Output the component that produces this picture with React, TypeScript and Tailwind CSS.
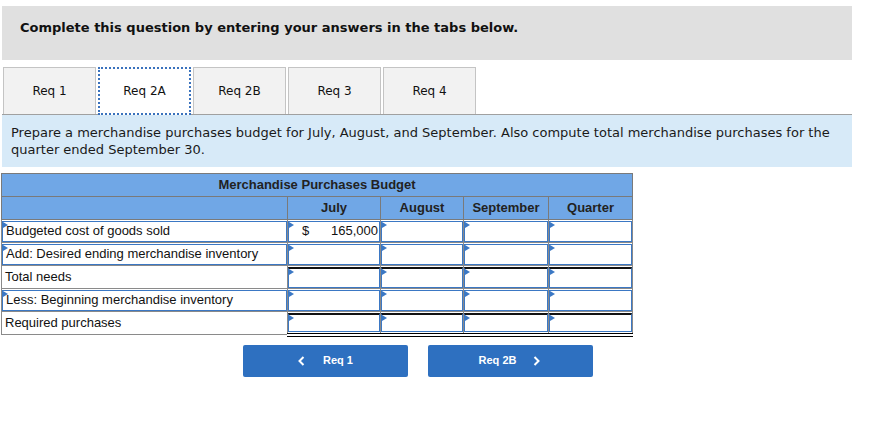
import React from 'react';

const tabs = ['Req 1', 'Req 2A', 'Req 2B', 'Req 3', 'Req 4'];

const rows = [
  { label: 'Budgeted cost of goods sold', marked: true, total: false, july: '165,000' },
  { label: 'Add: Desired ending merchandise inventory', marked: true, total: false },
  { label: 'Total needs', marked: false, total: true },
  { label: 'Less: Beginning merchandise inventory', marked: true, total: false },
  { label: 'Required purchases', marked: false, total: true, last: true },
];

/* small blue flag in the corner of an editable cell */
function Flag() {
  return (
    <span className="absolute left-0 top-0 h-0 w-0 border-y-[3px] border-l-[5px] border-y-transparent border-l-[#3b78c4]" />
  );
}

function InputCell({ row, value }: { row: (typeof rows)[number]; value?: string }) {
  return (
    <td className={`p-0 border border-[#8a8a8a] ${row.last ? 'border-b-[4px] border-b-black border-double' : ''}`}>
      <div
        className={`relative bg-white border border-[#3b78c4] ${row.last ? 'h-[19px]' : 'h-[21px]'} ${
          row.total ? 'border-t-2 border-t-[#111]' : ''
        }`}
      >
        <Flag />
        {value && (
          <div className="flex h-full items-center justify-between pl-[13px] pr-[1px]">
            <span>$</span>
            <span>{value}</span>
          </div>
        )}
      </div>
    </td>
  );
}

export default function App() {
  return (
    <div className="min-h-[427px] w-[886px] bg-white pt-[6px] text-[#111]">
      <div className="ml-[2px] w-[850px]">
        {/* Instructions header */}
        <div className="h-[54px] bg-[#e0e0e0] pl-[18px] pt-[14px] font-['DejaVu_Sans',sans-serif] text-[13px] font-bold leading-[16px]">
          Complete this question by entering your answers in the tabs below.
        </div>

        {/* Tabs */}
        <div className="mt-[7px] flex h-[48px] border-b border-[#a0a0a0] pl-[1px] font-['DejaVu_Sans',sans-serif] text-[12px]">
          {tabs.map((t, i) => {
            const active = i === 1;
            return (
              <div
                key={t}
                className={`flex w-[93px] items-center justify-center ${i > 0 ? 'ml-[2px]' : ''} ${
                  active
                    ? '-mb-px border-2 border-dotted border-[#3a72bd] bg-white'
                    : 'border border-b-0 border-[#c4c4c4] bg-[#f2f2f2]'
                }`}
              >
                {t}
              </div>
            );
          })}
        </div>

        {/* Requirement text */}
        <div className="h-[52px] bg-[#d7eaf8] pl-[9px] pt-[9px] font-['DejaVu_Sans',sans-serif] text-[13px] leading-[17px] text-[#1a1a1a]">
          Prepare a merchandise purchases budget for July, August, and September. Also compute total merchandise purchases for the quarter ended September 30.
        </div>
      </div>

      {/* Budget table */}
      <table className="ml-px mt-[6px] table-fixed border-collapse border border-[#7a7a7a] font-['Liberation_Sans',Arial,sans-serif] text-[13px] text-[#111]">
        <colgroup>
          <col className="w-[286px]" />
          <col className="w-[93px]" />
          <col className="w-[83px]" />
          <col className="w-[85px]" />
          <col className="w-[84px]" />
        </colgroup>
        <thead>
          <tr className="h-[23px] bg-[#70a7e6]">
            <th colSpan={5} className="border border-[#7a7a7a] p-0 text-center font-bold text-[#222]">
              Merchandise Purchases Budget
            </th>
          </tr>
          <tr className="h-[23px] bg-[#70a7e6] font-bold text-[#222]">
            <th className="border border-[#7a7a7a] p-0" />
            <th className="border border-[#7a7a7a] p-0 text-center">July</th>
            <th className="border border-[#7a7a7a] p-0 text-center">August</th>
            <th className="border border-[#7a7a7a] p-0 text-center">September</th>
            <th className="border border-[#7a7a7a] p-0 text-center">Quarter</th>
          </tr>
        </thead>
        <tbody>
          {rows.map((row) => (
            <tr key={row.label} className="h-[23px]">
              <td className="p-0 border border-[#8a8a8a]">
                <div
                  className={`relative flex h-[21px] items-center pl-[3px] ${
                    row.marked ? 'border border-[#3b78c4]' : ''
                  }`}
                >
                  {row.marked && <Flag />}
                  {row.label}
                </div>
              </td>
              <InputCell row={row} value={row.july} />
              <InputCell row={row} />
              <InputCell row={row} />
              <InputCell row={row} />
            </tr>
          ))}
        </tbody>
      </table>

      {/* Navigation buttons */}
      <div className="mt-[8px] flex pl-[243px] font-['Liberation_Sans',Arial,sans-serif] text-[11px] font-bold text-white">
        <button className="flex h-[32px] w-[165px] items-center justify-center gap-[18px] rounded-[2px] bg-[#2e70c0]">
          <svg width="7" height="10" viewBox="0 0 7 10" fill="none" stroke="white" strokeWidth="2">
            <path d="M5.5 1 L1.5 5 L5.5 9" />
          </svg>
          <span>Req 1</span>
        </button>
        <button className="ml-[20px] flex h-[32px] w-[165px] items-center justify-center gap-[17px] rounded-[2px] bg-[#2e70c0] pr-[2px]">
          <span>Req 2B</span>
          <svg width="7" height="10" viewBox="0 0 7 10" fill="none" stroke="white" strokeWidth="2">
            <path d="M1.5 1 L5.5 5 L1.5 9" />
          </svg>
        </button>
      </div>
    </div>
  );
}
